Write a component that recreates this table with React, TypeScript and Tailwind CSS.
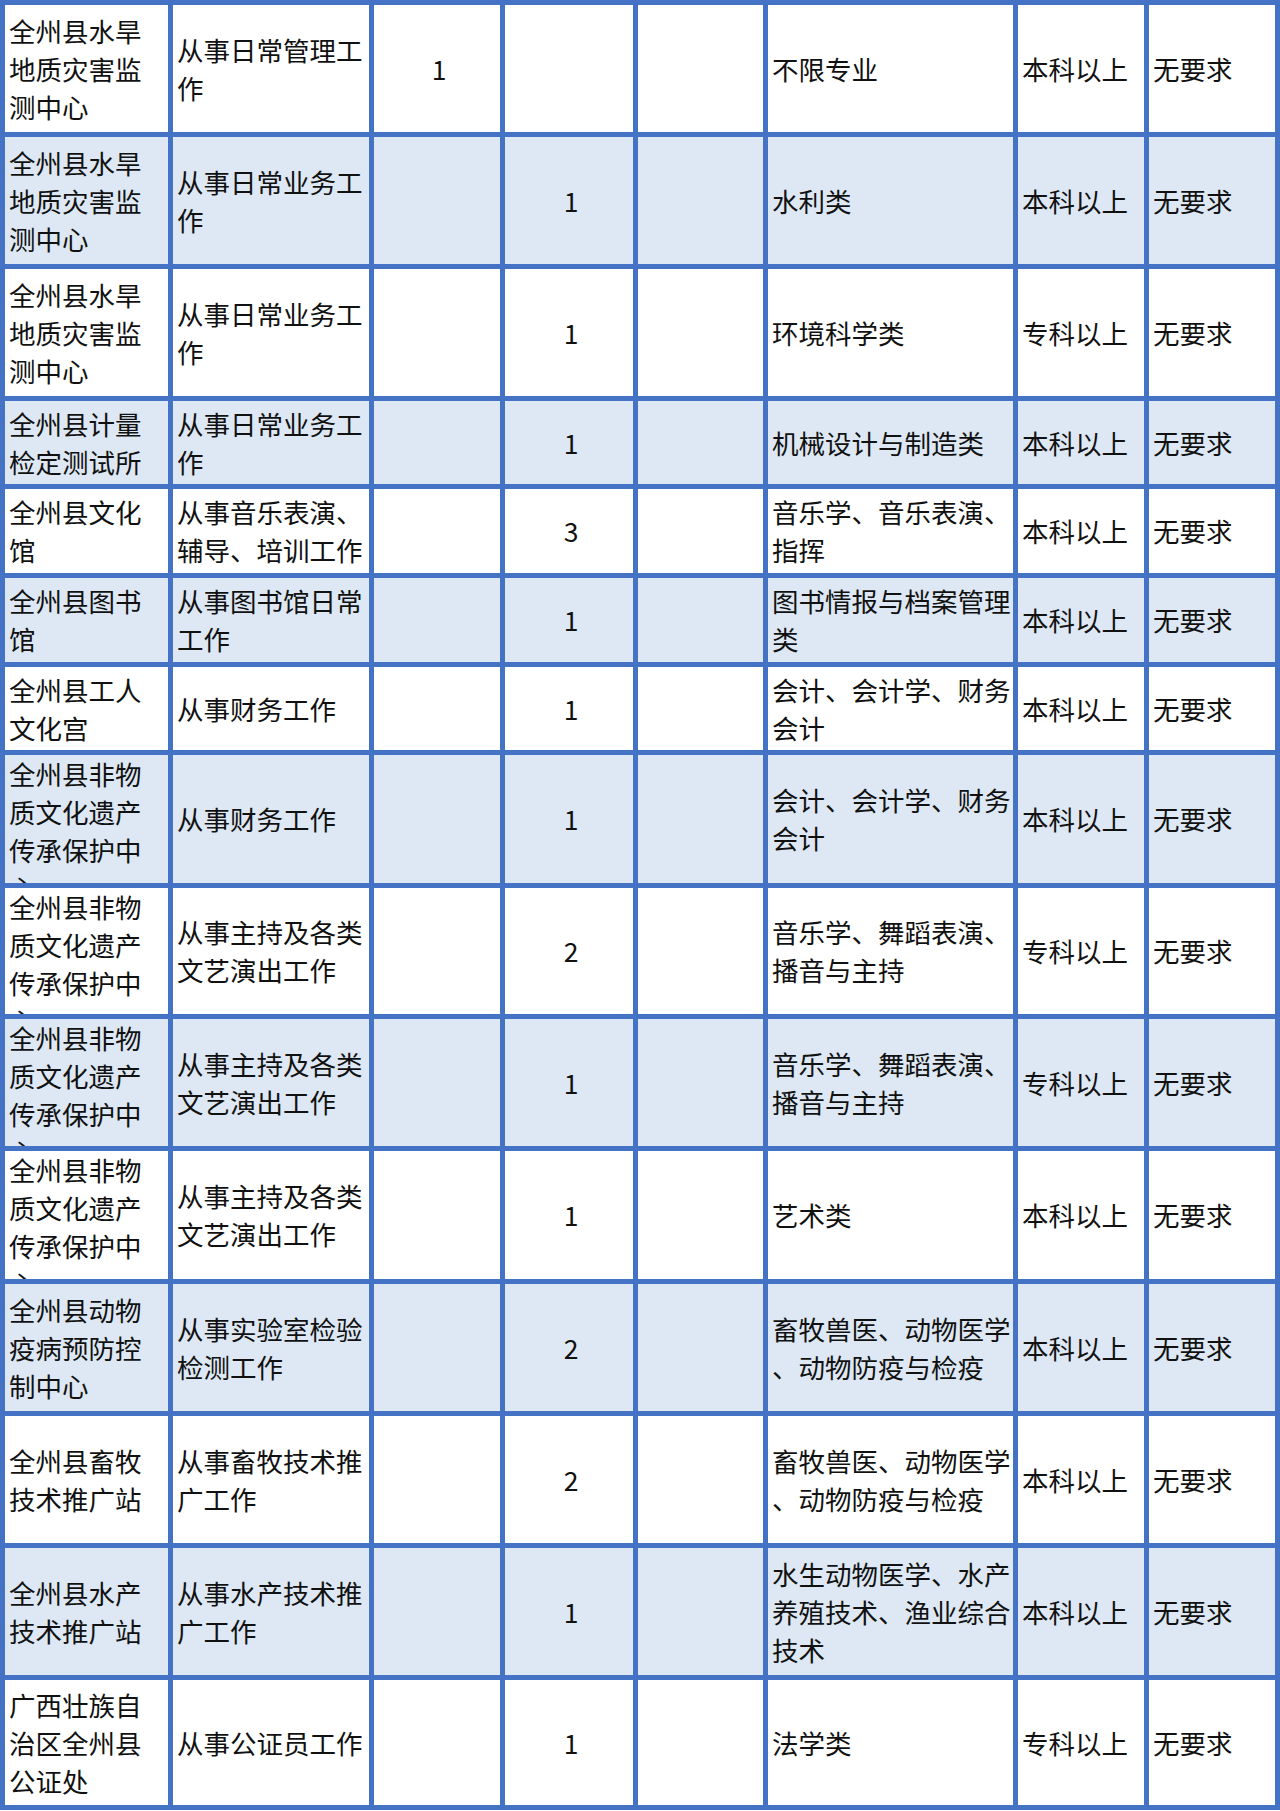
import React from "react";

type Cell = {
  lines: string[];
  align?: "left" | "center";
  top?: boolean;
};

type Row = {
  org: string[];
  job: string[];
  n1: string;
  n2: string;
  major: string[];
  edu: string;
  other: string;
  orgTop?: boolean;
};

const ORG_SHUIHAN = ["全州县水旱", "地质灾害监", "测中心"];
const ORG_FEIWUZHI = ["全州县非物", "质文化遗产", "传承保护中", "心"];
const JOB_ZHUCHI = ["从事主持及各类", "文艺演出工作"];
const MAJOR_YINYUE = ["音乐学、舞蹈表演、", "播音与主持"];
const MAJOR_XUMU = ["畜牧兽医、动物医学", "、动物防疫与检疫"];
const MAJOR_KUAIJI = ["会计、会计学、财务", "会计"];

const rows: Row[] = [
  { org: ORG_SHUIHAN, job: ["从事日常管理工", "作"], n1: "1", n2: "", major: ["不限专业"], edu: "本科以上", other: "无要求" },
  { org: ORG_SHUIHAN, job: ["从事日常业务工", "作"], n1: "", n2: "1", major: ["水利类"], edu: "本科以上", other: "无要求" },
  { org: ORG_SHUIHAN, job: ["从事日常业务工", "作"], n1: "", n2: "1", major: ["环境科学类"], edu: "专科以上", other: "无要求" },
  { org: ["全州县计量", "检定测试所"], job: ["从事日常业务工", "作"], n1: "", n2: "1", major: ["机械设计与制造类"], edu: "本科以上", other: "无要求" },
  { org: ["全州县文化", "馆"], job: ["从事音乐表演、", "辅导、培训工作"], n1: "", n2: "3", major: ["音乐学、音乐表演、", "指挥"], edu: "本科以上", other: "无要求" },
  { org: ["全州县图书", "馆"], job: ["从事图书馆日常", "工作"], n1: "", n2: "1", major: ["图书情报与档案管理", "类"], edu: "本科以上", other: "无要求" },
  { org: ["全州县工人", "文化宫"], job: ["从事财务工作"], n1: "", n2: "1", major: MAJOR_KUAIJI, edu: "本科以上", other: "无要求" },
  { org: ORG_FEIWUZHI, orgTop: true, job: ["从事财务工作"], n1: "", n2: "1", major: MAJOR_KUAIJI, edu: "本科以上", other: "无要求" },
  { org: ORG_FEIWUZHI, orgTop: true, job: JOB_ZHUCHI, n1: "", n2: "2", major: MAJOR_YINYUE, edu: "专科以上", other: "无要求" },
  { org: ORG_FEIWUZHI, orgTop: true, job: JOB_ZHUCHI, n1: "", n2: "1", major: MAJOR_YINYUE, edu: "专科以上", other: "无要求" },
  { org: ORG_FEIWUZHI, orgTop: true, job: JOB_ZHUCHI, n1: "", n2: "1", major: ["艺术类"], edu: "本科以上", other: "无要求" },
  { org: ["全州县动物", "疫病预防控", "制中心"], job: ["从事实验室检验", "检测工作"], n1: "", n2: "2", major: MAJOR_XUMU, edu: "本科以上", other: "无要求" },
  { org: ["全州县畜牧", "技术推广站"], job: ["从事畜牧技术推", "广工作"], n1: "", n2: "2", major: MAJOR_XUMU, edu: "本科以上", other: "无要求" },
  { org: ["全州县水产", "技术推广站"], job: ["从事水产技术推", "广工作"], n1: "", n2: "1", major: ["水生动物医学、水产", "养殖技术、渔业综合", "技术"], edu: "本科以上", other: "无要求" },
  { org: ["广西壮族自", "治区全州县", "公证处"], job: ["从事公证员工作"], n1: "", n2: "1", major: ["法学类"], edu: "专科以上", other: "无要求" },
];

function CellBox({ cell, shaded }: { cell: Cell; shaded: boolean }) {
  return (
    <div
      className={
        "flex flex-col overflow-hidden pl-[4px] " +
        (shaded ? "bg-[#dde8f4] " : "bg-white ") +
        (cell.top ? "justify-start " : "justify-center ") +
        (cell.align === "center" ? "items-center pl-0" : "items-start")
      }
    >
      {cell.lines.map((l, i) => (
        <div key={i} className="whitespace-nowrap leading-[38px] shrink-0">
          {l}
        </div>
      ))}
    </div>
  );
}

export default function App() {
  return (
    <div className="w-[1280px] h-[1811px] bg-white">
      <div
        className="grid w-[1280px] bg-[#4472c4] p-[5px] gap-[5px] text-[26.5px] text-[#111] grid-cols-[163px_196px_126px_128px_125px_245px_126px_126px] grid-rows-[127px_127px_127px_83px_84px_84px_83px_128px_126px_127px_128px_127px_127px_127px_125px]"
        style={{ fontFamily: '"Noto Sans CJK SC", "Noto Sans", sans-serif' }}
      >
        {rows.map((r, ri) => {
          const shaded = ri % 2 === 1;
          const cells: Cell[] = [
            { lines: r.org, top: r.orgTop },
            { lines: r.job },
            { lines: r.n1 ? [r.n1] : [], align: "center" },
            { lines: r.n2 ? [r.n2] : [], align: "center" },
            { lines: [] },
            { lines: r.major },
            { lines: [r.edu] },
            { lines: [r.other] },
          ];
          return cells.map((c, ci) => <CellBox key={ri + "-" + ci} cell={c} shaded={shaded} />);
        })}
      </div>
    </div>
  );
}
